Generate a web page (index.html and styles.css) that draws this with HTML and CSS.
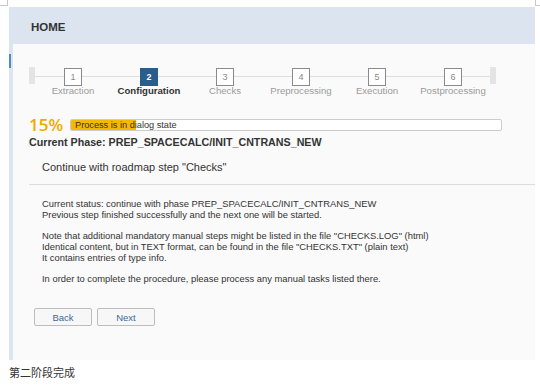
FILE: index.html
```html
<!DOCTYPE html>
<html>
<head>
<meta charset="utf-8">
<link rel="stylesheet" href="styles.css">
</head>
<body>
<div class="mark mark-l"></div>
<div class="mark mark-r"></div>
<div class="page">
  <div class="header"><span class="title">HOME</span></div>
  <div class="content">
    <div class="strip"><div class="strip-active"></div></div>
    <div class="main">
      <div class="roadmap">
        <div class="cap"></div>
        <div class="step"><div class="box">1</div><div class="label">Extraction</div></div>
        <div class="step active"><div class="box">2</div><div class="label">Configuration</div></div>
        <div class="step"><div class="box">3</div><div class="label">Checks</div></div>
        <div class="step"><div class="box">4</div><div class="label">Preprocessing</div></div>
        <div class="step"><div class="box">5</div><div class="label">Execution</div></div>
        <div class="step"><div class="box">6</div><div class="label">Postprocessing</div></div>
        <div class="cap cap-end"></div>
      </div>
      <div class="progress-row">
        <span class="pct">15%</span>
        <div class="bar"><div class="fill" style="width:15%"></div><span class="bar-text">Process is in dialog state</span></div>
      </div>
      <div class="phase">Current Phase: PREP_SPACECALC/INIT_CNTRANS_NEW</div>
      <div class="continue">Continue with roadmap step "Checks"</div>
      <div class="sep"></div>
      <div class="body">
        <p>Current status: continue with phase PREP_SPACECALC/INIT_CNTRANS_NEW<br>Previous step finished successfully and the next one will be started.</p>
        <p>Note that additional mandatory manual steps might be listed in the file "CHECKS.LOG" (html)<br>Identical content, but in TEXT format, can be found in the file "CHECKS.TXT" (plain text)<br>It contains entries of type info.</p>
        <p>In order to complete the procedure, please process any manual tasks listed there.</p>
      </div>
      <div class="buttons">
        <button class="btn">Back</button>
        <button class="btn">Next</button>
      </div>
    </div>
  </div>
</div>
<div class="caption">第二阶段完成</div>
</body>
</html>
```
FILE: styles.css
```css
html, body {
  margin: 0;
  padding: 0;
  background: #ffffff;
}
body {
  width: 540px;
  height: 392px;
  position: relative;
  font-family: "Liberation Sans", "Noto Sans CJK SC", sans-serif;
  color: #333333;
  overflow: hidden;
}
.mark {
  position: absolute;
  top: 0;
  width: 7px;
  height: 5px;
  border-bottom: 1px solid #c8c8c8;
}
.mark-l {
  left: 0;
  border-right: 1px solid #c8c8c8;
}
.mark-r {
  left: 535px;
  border-left: 1px solid #c8c8c8;
}
.page {
  margin: 7px 0 0 9px;
  width: 526px;
}
.header {
  height: 37px;
  background: #dce5ef;
  display: flex;
  align-items: center;
  padding-left: 22px;
}
.title {
  font-weight: bold;
  font-size: 11.5px;
  color: #333333;
  padding-top: 2px;
}
.content {
  display: flex;
  background: #fafafa;
  height: 316px;
}
.strip {
  width: 4px;
  background: #dce5ef;
  flex: none;
}
.strip-active {
  margin-top: 10px;
  width: 1.5px;
  height: 14px;
  background: #4a8cc8;
}
.main {
  flex: 1;
  padding-left: 16px;
  padding-top: 23px;
}
.roadmap {
  display: flex;
  width: 467px;
  background: linear-gradient(#dddddd, #dddddd) no-repeat 0 9px / 100% 1px;
}
.cap {
  width: 6px;
  height: 17px;
  background: #e4e4e4;
  flex: none;
}
.cap-end {
  margin-left: -1px;
}
.step {
  width: 76px;
  display: flex;
  flex-direction: column;
  align-items: center;
  flex: none;
}
.step:first-of-type {
  margin-left: -1px;
}
.box {
  width: 18px;
  height: 18px;
  margin-top: 1px;
  border: 1px solid #8a8a8a;
  background: #ffffff;
  box-sizing: border-box;
  font-size: 9px;
  color: #8a8a8a;
  display: flex;
  align-items: center;
  justify-content: center;
}
.label {
  font-size: 9.6px;
  color: #9a9a9a;
  margin-top: -1px;
  line-height: 12px;
  white-space: nowrap;
}
.step.active .box {
  background: #2b5d8a;
  border-color: #2b5d8a;
  color: #ffffff;
  font-weight: bold;
}
.step.active .label {
  color: #333333;
  font-weight: bold;
}
.progress-row {
  display: flex;
  align-items: center;
  margin-top: 20px;
  height: 16px;
}
.pct {
  font-family: "Open Sans", sans-serif;
  font-size: 17px;
  font-weight: 600;
  color: #f0ab00;
  width: 41px;
  flex: none;
  line-height: 16px;
}
.bar {
  width: 432px;
  height: 12px;
  box-sizing: border-box;
  border: 1px solid #cccccc;
  border-radius: 2px;
  background: #ffffff;
  display: flex;
  align-items: center;
  overflow: hidden;
  position: relative;
}
.fill {
  height: 100%;
  background: #f5b800;
  flex: none;
}
.bar-text {
  position: absolute;
  left: 4px;
  top: -1px;
  font-size: 9.2px;
  line-height: 12px;
  color: #333333;
}
.phase {
  font-weight: bold;
  font-size: 10.7px;
  color: #333333;
  margin-top: 3px;
  line-height: 13px;
}
.continue {
  font-size: 11px;
  color: #333333;
  margin: 11px 0 0 13px;
  line-height: 14px;
}
.sep {
  height: 1px;
  background: #dcdcdc;
  margin-top: 10px;
}
.body {
  margin: 13px 0 0 13px;
  font-size: 9.4px;
  line-height: 11px;
  color: #333333;
}
.body p {
  margin: 0 0 10px 0;
}
.buttons {
  display: flex;
  gap: 5px;
  margin: 24px 0 0 5px;
}
.btn {
  width: 58px;
  height: 18px;
  border: 1px solid #bdbdbd;
  border-radius: 2px;
  background: #f7f7f7;
  font-family: "Liberation Sans", sans-serif;
  font-size: 9.5px;
  color: #3c6a96;
  padding: 0;
}
.caption {
  margin: 5px 0 0 9px;
  font-family: "Noto Sans CJK SC", sans-serif;
  font-size: 11px;
  color: #333333;
  line-height: 14px;
}
```
